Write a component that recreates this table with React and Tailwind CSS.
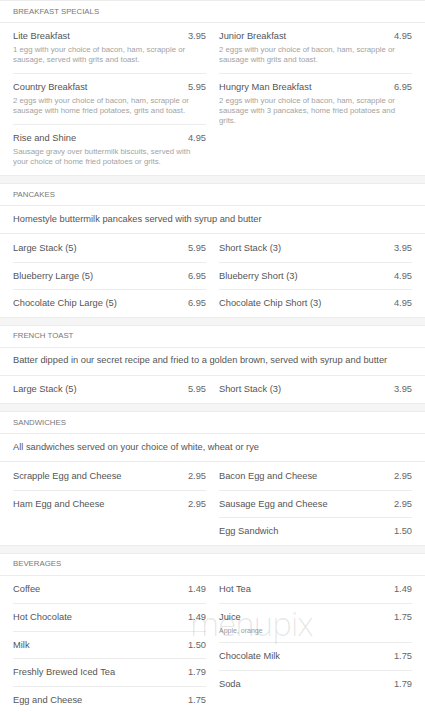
import React from "react";

const breakfastLeft = [
  { name: "Lite Breakfast", price: "3.95", desc: "1 egg with your choice of bacon, ham, scrapple or sausage, served with grits and toast." },
  { name: "Country Breakfast", price: "5.95", desc: "2 eggs with your choice of bacon, ham, scrapple or sausage with home fried potatoes, grits and toast." },
  { name: "Rise and Shine", price: "4.95", desc: "Sausage gravy over buttermilk biscuits, served with your choice of home fried potatoes or grits." },
];

const breakfastRight = [
  { name: "Junior Breakfast", price: "4.95", desc: "2 eggs with your choice of bacon, ham, scrapple or sausage with grits and toast." },
  { name: "Hungry Man Breakfast", price: "6.95", desc: "2 eggs with your choice of bacon, ham, scrapple or sausage with 3 pancakes, home fried potatoes and grits." },
];

const sections = [
  {
    title: "Pancakes",
    note: "Homestyle buttermilk pancakes served with syrup and butter",
    left: [
      { name: "Large Stack (5)", price: "5.95" },
      { name: "Blueberry Large (5)", price: "6.95" },
      { name: "Chocolate Chip Large (5)", price: "6.95" },
    ],
    right: [
      { name: "Short Stack (3)", price: "3.95" },
      { name: "Blueberry Short (3)", price: "4.95" },
      { name: "Chocolate Chip Short (3)", price: "4.95" },
    ],
  },
  {
    title: "French Toast",
    note: "Batter dipped in our secret recipe and fried to a golden brown, served with syrup and butter",
    left: [{ name: "Large Stack (5)", price: "5.95" }],
    right: [{ name: "Short Stack (3)", price: "3.95" }],
  },
  {
    title: "Sandwiches",
    note: "All sandwiches served on your choice of white, wheat or rye",
    left: [
      { name: "Scrapple Egg and Cheese", price: "2.95" },
      { name: "Ham Egg and Cheese", price: "2.95" },
    ],
    right: [
      { name: "Bacon Egg and Cheese", price: "2.95" },
      { name: "Sausage Egg and Cheese", price: "2.95" },
      { name: "Egg Sandwich", price: "1.50" },
    ],
  },
  {
    title: "Beverages",
    left: [
      { name: "Coffee", price: "1.49" },
      { name: "Hot Chocolate", price: "1.49" },
      { name: "Milk", price: "1.50" },
      { name: "Freshly Brewed Iced Tea", price: "1.79" },
      { name: "Egg and Cheese", price: "1.75" },
    ],
    right: [
      { name: "Hot Tea", price: "1.49" },
      { name: "Juice", price: "1.75", sub: "Apple, orange" },
      { name: "Chocolate Milk", price: "1.75" },
      { name: "Soda", price: "1.79" },
    ],
  },
];

function Header({ title }) {
  return (
    <div className="h-[22px] flex items-center px-[13px] border-b border-[#ececec] text-[7.8px] uppercase text-[#777]">
      {title}
    </div>
  );
}

function Special({ item, first }) {
  return (
    <div className={`pt-[7px] pb-[8px] ${first ? "" : "border-t border-[#ececec]"}`}>
      <div className="flex justify-between text-[9.3px] leading-[12px] text-[#555]">
        <span>{item.name}</span>
        <span className="text-[#666]">{item.price}</span>
      </div>
      <p className="mt-[3px] text-[7.8px] leading-[10px] text-[#a3a3a3]">{item.desc}</p>
    </div>
  );
}

function Row({ item, first }) {
  return (
    <div
      className={`flex flex-col justify-center ${item.sub ? "h-[39px]" : "h-[27.5px]"} ${
        first ? "" : "border-t border-[#ececec]"
      }`}
    >
      <div className="flex justify-between text-[9.3px] leading-[12px] text-[#555]">
        <span>{item.name}</span>
        <span className="text-[#666]">{item.price}</span>
      </div>
      {item.sub && <div className="mt-[3px] text-[7px] leading-[9px] text-[#999]">{item.sub}</div>}
    </div>
  );
}

function Column({ items }) {
  return (
    <div className="flex flex-col">
      {items.map((it, i) => (
        <Row key={it.name} item={it} first={i === 0} />
      ))}
    </div>
  );
}

export default function App() {
  return (
    <div className="relative min-h-[712px] bg-[#f5f5f5] font-['Liberation_Sans',Arial,sans-serif] flex flex-col gap-[7px] overflow-hidden">
      {/* Breakfast specials */}
      <section className="bg-white border-y border-[#ececec]">
        <Header title="Breakfast Specials" />
        <div className="grid grid-cols-2 gap-[13px] px-[13px]">
          <div className="flex flex-col">
            {breakfastLeft.map((it, i) => (
              <Special key={it.name} item={it} first={i === 0} />
            ))}
          </div>
          <div className="flex flex-col">
            {breakfastRight.map((it, i) => (
              <Special key={it.name} item={it} first={i === 0} />
            ))}
          </div>
        </div>
      </section>

      {sections.map((s) => (
        <section key={s.title} className="bg-white border-y border-[#ececec]">
          <Header title={s.title} />
          {s.note && (
            <div className="h-[28px] flex items-center px-[13px] border-b border-[#ececec] text-[9.3px] text-[#555]">
              {s.note}
            </div>
          )}
          <div className="grid grid-cols-2 gap-[13px] px-[13px]">
            <Column items={s.left} />
            <Column items={s.right} />
          </div>
        </section>
      ))}

      {/* watermark */}
      <div className="absolute left-[190px] top-[604px] text-[33px] leading-[40px] tracking-[-1px] text-black/10 font-['Open_Sans',sans-serif] font-light pointer-events-none">
        menupix
      </div>
    </div>
  );
}
